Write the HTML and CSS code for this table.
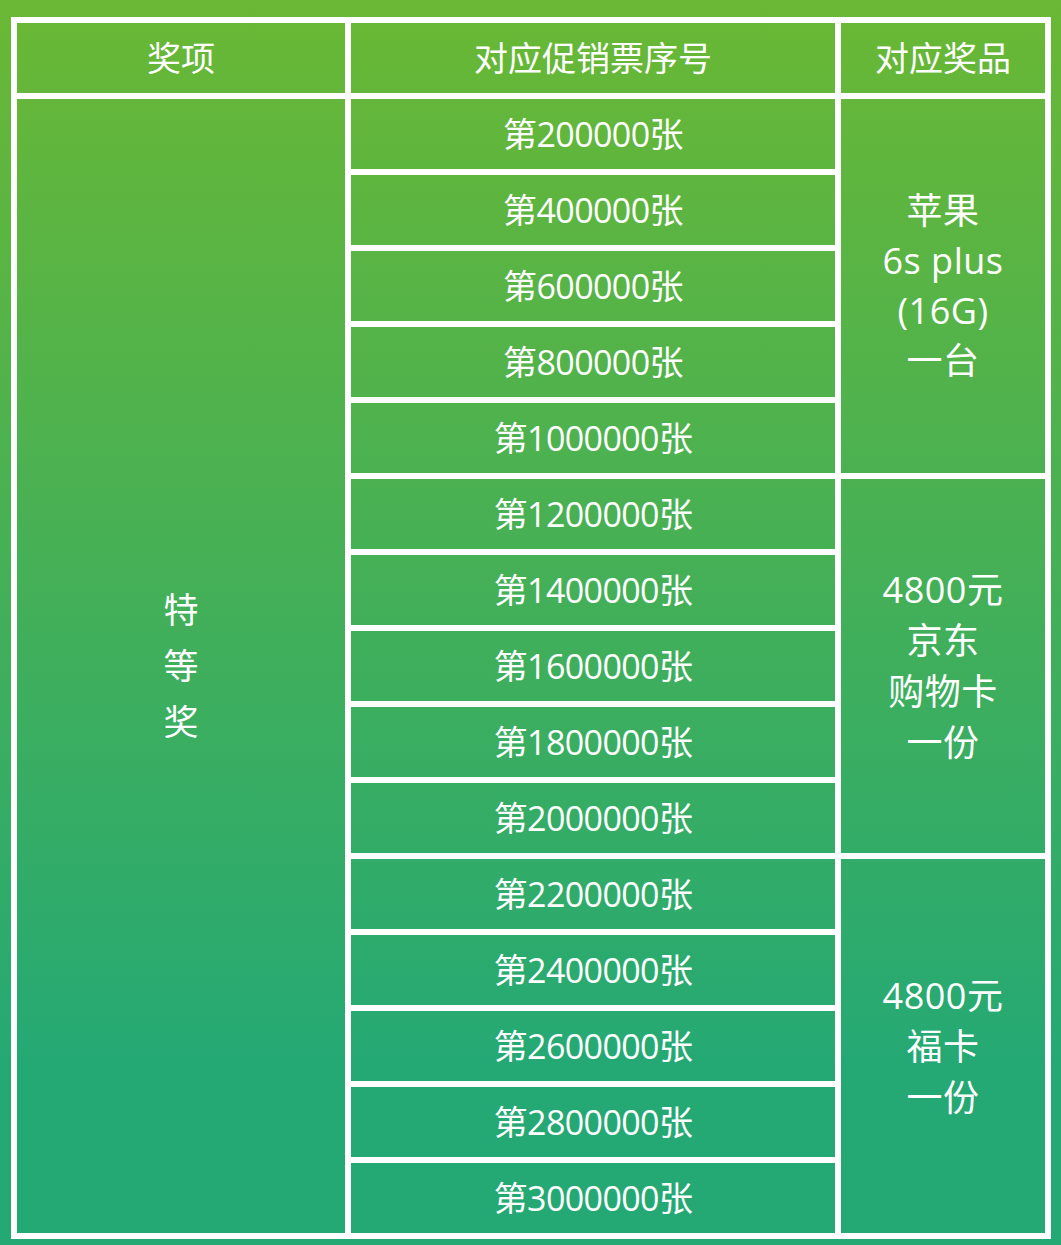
FILE: index.html
```html
<!DOCTYPE html>
<html lang="zh-CN">
<head>
<meta charset="utf-8">
<title>奖项</title>
<link rel="stylesheet" href="styles.css">
</head>
<body>
<div class="prize-table">
  <div class="cell head">奖项</div>
  <div class="cell head">对应促销票序号</div>
  <div class="cell head">对应奖品</div>

  <div class="cell level">特<br>等<br>奖</div>

  <div class="cell num r1">第200000张</div>
  <div class="cell num r2">第400000张</div>
  <div class="cell num r3">第600000张</div>
  <div class="cell num r4">第800000张</div>
  <div class="cell num r5">第1000000张</div>
  <div class="cell num r6">第1200000张</div>
  <div class="cell num r7">第1400000张</div>
  <div class="cell num r8">第1600000张</div>
  <div class="cell num r9">第1800000张</div>
  <div class="cell num r10">第2000000张</div>
  <div class="cell num r11">第2200000张</div>
  <div class="cell num r12">第2400000张</div>
  <div class="cell num r13">第2600000张</div>
  <div class="cell num r14">第2800000张</div>
  <div class="cell num r15">第3000000张</div>

  <div class="cell prize g1">苹果<br>6s plus<br>(16G)<br>一台</div>
  <div class="cell prize g2">4800元<br>京东<br>购物卡<br>一份</div>
  <div class="cell prize g3">4800元<br>福卡<br>一份</div>
</div>
</body>
</html>
```

FILE: styles.css
```css
html, body {
  margin: 0;
  padding: 0;
  height: 100%;
}

body {
  background: linear-gradient(to bottom, #6ab834 0%, #25a974 85%, #25a974 100%);
  background-attachment: fixed;
  font-family: "Open Sans", "Noto Sans CJK SC", sans-serif;
  color: #fff;
  overflow: hidden;
}

.prize-table {
  display: grid;
  grid-template-columns: 328px 484px 204px;
  grid-template-rows: repeat(16, 70px);
  gap: 6px;
  padding: 6px;
  width: 1028px;
  margin: 17px 0 0 11px;
  background: #fff;
}

.cell {
  display: flex;
  align-items: center;
  justify-content: center;
  text-align: center;
  font-size: 34px;
  line-height: 1;
  background: linear-gradient(to bottom, #6ab834 0%, #25a974 85%, #25a974 100%);
  background-attachment: fixed;
}

.head {
  grid-row: 1;
}

.level {
  grid-column: 1;
  grid-row: 2 / span 15;
  font-size: 35px;
  line-height: 56px;
}

.num {
  grid-column: 2;
  letter-spacing: -0.6px;
}

.r1 { grid-row: 2; }
.r2 { grid-row: 3; }
.r3 { grid-row: 4; }
.r4 { grid-row: 5; }
.r5 { grid-row: 6; }
.r6 { grid-row: 7; }
.r7 { grid-row: 8; }
.r8 { grid-row: 9; }
.r9 { grid-row: 10; }
.r10 { grid-row: 11; }
.r11 { grid-row: 12; }
.r12 { grid-row: 13; }
.r13 { grid-row: 14; }
.r14 { grid-row: 15; }
.r15 { grid-row: 16; }

.prize {
  grid-column: 3;
  font-size: 36px;
  line-height: 51px;
  letter-spacing: 0.5px;
}

.g1 { grid-row: 2 / span 5; line-height: 50px; }
.g2 { grid-row: 7 / span 5; }
.g3 { grid-row: 12 / span 5; }
```
